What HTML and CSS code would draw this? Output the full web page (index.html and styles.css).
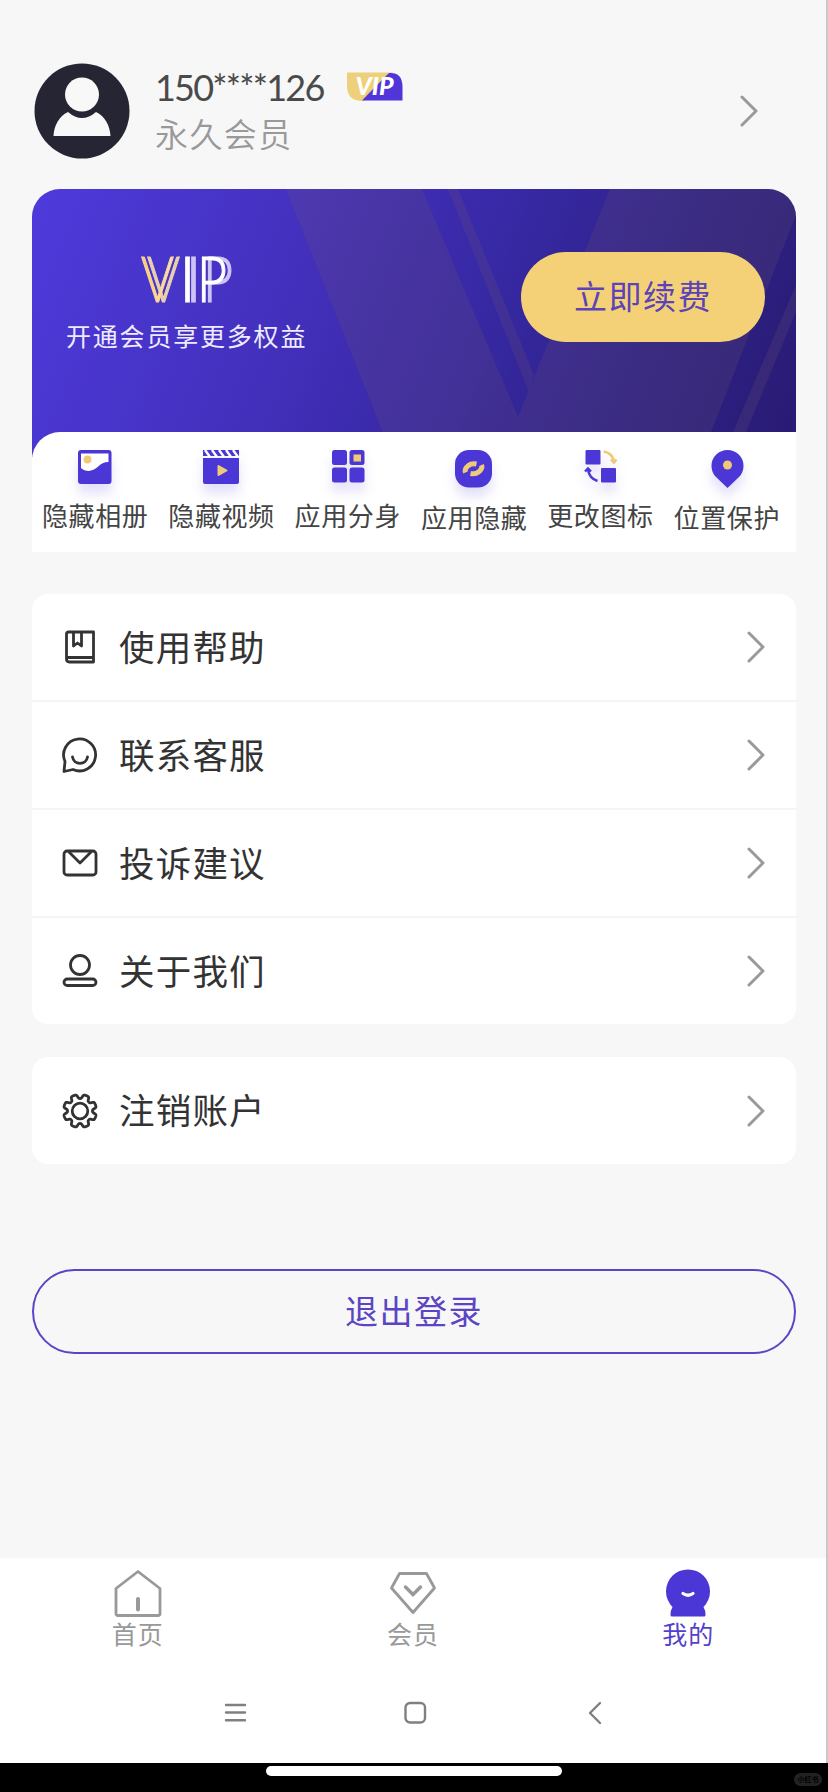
FILE: index.html
```html
<!DOCTYPE html>
<html lang="zh-CN">
<head>
<meta charset="utf-8">
<title>我的</title>
<link rel="stylesheet" href="styles.css">
</head>
<body>
<svg class="defs" width="0" height="0" aria-hidden="true">
  <symbol id="chevron" viewBox="0 0 20 32"><path d="M3 2 17 16 3 30" fill="none" stroke="#9a9a9a" stroke-width="3" stroke-linecap="round" stroke-linejoin="round"/></symbol>
</svg>
<div class="screen">
  <header class="profile">
    <svg class="avatar" viewBox="0 0 96 96"><circle cx="48" cy="48" r="47.5" fill="#262534"/><circle cx="48" cy="31.500" r="17" fill="#f8f8f8"/><path d="M19.500 73C20 63 25 53 34 49Q48 61 62 49C71 53 76 63 76.500 73Z" fill="#f8f8f8"/></svg>
    <div class="who">
      <div class="phone-line">
        <span class="phone">150****126</span>
        <svg class="badge" viewBox="0 0 56 30"><path d="M0 0.500H46L17 29H14Q0 28 0 14Z" fill="#efd07a"/><path d="M42 1Q55 0 55.500 14V28.500H15L27 16Z" fill="#5036d9"/><text x="8.500" y="22.500" class="badge-text" textLength="38" lengthAdjust="spacingAndGlyphs">VIP</text></svg>
      </div>
      <div class="level">永久会员</div>
    </div>
    <svg class="chevron"><use href="#chevron"/></svg>
  </header>

  <section class="vip-card">
    <div class="banner">
      <svg class="rays" viewBox="0 0 764 264" preserveAspectRatio="none">
        <g fill="#6c5470" fill-opacity=".22">
          <path d="M254 0H390L486 228L578 0H764V26L679 243V264H359Z"/>
          <path d="M416 0H426L502 186L497 203Z"/>
          <path d="M764 96V123L714 243H701Z"/>
        </g>
      </svg>
      <div class="pitch">
        <svg class="logo" viewBox="0 0 94 50"><defs><linearGradient id="gold" x1="0" x2="1"><stop offset="0" stop-color="#ffc86a"/><stop offset="1" stop-color="#f8e5c0"/></linearGradient></defs>
          <text class="logo-v" x="1" y="47" fill="url(#gold)" textLength="33" lengthAdjust="spacingAndGlyphs">V</text><text class="logo-ip" x="39" y="47" textLength="17" lengthAdjust="spacingAndGlyphs">I</text><text class="logo-ip" x="57" y="47" textLength="30" lengthAdjust="spacingAndGlyphs">P</text></svg>
        <div class="slogan">开通会员享更多权益</div>
      </div>
      <div class="renew">立即续费</div>
    </div>
    <div class="features">
      <div class="feature"><svg viewBox="0 0 40 38"><rect x="3" y="0" width="33.500" height="34" rx="3" fill="#4b36d6"/><path d="M6 3.500H33.500V12C24 12 23 20 14 21Q9 21 6 18Z" fill="#fff"/><circle cx="12.500" cy="9.500" r="4" fill="#efcb78"/></svg><span>隐藏相册</span></div>
      <div class="feature"><svg viewBox="0 0 40 38"><path d="M2 0H38V6H2Z" fill="#4b36d6"/><path d="M2 8H38V32Q38 34 36 34H4Q2 34 2 32Z" fill="#4b36d6"/><path d="M4 0 9 7M11 0 16 7M18 0 23 7M25 0 30 7M32 0 37 7" stroke="#fff" stroke-width="2.400"/><path d="M17.500 16 25.500 20.500 17.500 25Z" fill="#efcb78" stroke="#efcb78" stroke-width="2" stroke-linejoin="round"/></svg><span>隐藏视频</span></div>
      <div class="feature"><svg viewBox="0 0 40 38"><g fill="#4b36d6"><rect x="4" y="0" width="15" height="15" rx="2.500"/><rect x="21.500" y="0" width="15" height="15" rx="2.500"/><rect x="4" y="17.500" width="15" height="15" rx="2.500"/><rect x="21.500" y="17.500" width="15" height="15" rx="2.500"/></g><rect x="25.500" y="4.500" width="7.500" height="7" fill="#efcb78"/></svg><span>应用分身</span></div>
      <div class="feature lower"><svg viewBox="0 0 40 38"><rect x="1" y="0" width="37" height="37.500" rx="14" fill="#4b36d6"/><g fill="none" stroke="#efcb78" stroke-width="5"><path d="M11.500 22.500Q10 19 14.500 15.500 17.500 13 22.500 14"/><path d="M27.500 15Q29 18.500 24.500 22 21.500 24.500 16.500 23.500"/></g></svg><span>应用隐藏</span></div>
      <div class="feature"><svg viewBox="0 0 40 38"><rect x="5.500" y="0" width="15" height="14.500" rx="1" fill="#4b36d6"/><rect x="21" y="18" width="15" height="14.500" rx="1" fill="#4b36d6"/><path d="M23.500 1.500Q32.500 3 34 11.500M31 9.500 34 12.500 36.500 9.500" fill="none" stroke="#efcb78" stroke-width="2.600"/><path d="M17.500 31Q9.500 28.500 8 20M5 21.500 8 18.500 11 21.500" fill="none" stroke="#4b36d6" stroke-width="2.400"/></svg><span>更改图标</span></div>
      <div class="feature lower"><svg viewBox="0 0 40 38"><path d="M20.500 38 9 27A16 16 0 1 1 32 27Z" fill="#4b36d6"/><circle cx="20.500" cy="15" r="4.500" fill="#efcb78"/></svg><span>位置保护</span></div>
    </div>
  </section>

  <section class="menu">
    <div class="row"><svg class="icon" viewBox="0 0 36 36"><path d="M6.500 3H31.500V33H7.500Q4.500 33 4.500 30V5Q4.500 3 6.500 3M4.500 28.500H31.500M11.500 3V17L15.500 14 19.500 17V3" /></svg><span>使用帮助</span><svg class="chevron"><use href="#chevron"/></svg></div>
    <div class="row"><svg class="icon" viewBox="0 0 36 36"><path d="M2 34.500 3 24.500A16 16 0 1 1 11 32.500ZM10.500 20A7.600 7.600 0 0 0 25.500 20" /></svg><span>联系客服</span><svg class="chevron"><use href="#chevron"/></svg></div>
    <div class="row"><svg class="icon" viewBox="0 0 36 36"><rect x="2" y="6" width="32" height="24" rx="3"/><path d="M7 7 18 18 29 7"/></svg><span>投诉建议</span><svg class="chevron"><use href="#chevron"/></svg></div>
    <div class="row"><svg class="icon" viewBox="0 0 36 36"><circle cx="18" cy="12" r="9.500"/><rect x="2" y="26" width="32" height="6.500" rx="3.250"/></svg><span>关于我们</span><svg class="chevron"><use href="#chevron"/></svg></div>
  </section>

  <section class="menu account">
    <div class="row"><svg class="icon gear" viewBox="0 0 36 36"><path id="gear"/><circle cx="18" cy="18" r="7.800"/></svg><span>注销账户</span><svg class="chevron"><use href="#chevron"/></svg></div>
  </section>

  <div class="logout">退出登录</div>

  <footer class="bottom">
    <nav class="tabs">
      <div class="tab"><svg viewBox="0 0 50 50"><path d="M25 2.500 47 19.500V44.500Q47 46.500 45 46.500H5Q3 46.500 3 44.500V19.500Z" fill="none" stroke="#999" stroke-width="2.800" stroke-linejoin="round"/><path d="M25 30V40.500" stroke="#999" stroke-width="4" stroke-linecap="round"/></svg><span>首页</span></div>
      <div class="tab"><svg viewBox="0 0 50 50"><path d="M11.500 4.500H38.500L46.500 19 25 43.500 3.500 19Z" fill="none" stroke="#999" stroke-width="2.800" stroke-linejoin="round"/><path d="M17.500 18 25 25.500 32.500 18" fill="none" stroke="#999" stroke-width="3.500" stroke-linecap="round"/></svg><span>会员</span></div>
      <div class="tab active"><svg viewBox="0 0 50 50"><path d="M9.500 38A22 22 0 1 1 40.500 38Q42.500 41 42.500 46Q42.500 47.500 41 47.500H9Q7.500 47.500 7.500 46 7.500 41 9.500 38Z" fill="#4b36d6"/><path d="M20 24.500Q25 28 30 24.500" fill="none" stroke="#fff" stroke-width="3.200" stroke-linecap="round"/></svg><span>我的</span></div>
    </nav>
    <div class="system-nav">
      <svg viewBox="0 0 24 24"><path d="M3 4H22M3 11.500H22M3 19.200H22"/></svg>
      <svg viewBox="0 0 24 24"><rect x="2.500" y="2" width="19.500" height="19.500" rx="4.500"/></svg>
      <svg viewBox="0 0 24 24"><path d="M18 2 8 12 18 22"/></svg>
    </div>
    <div class="home-strip"><div class="home-bar"></div><span class="mark">小红书</span></div>
  </footer>
</div>
<script src="gear.js"></script>
</body>
</html>
```

FILE: gear.js
```js
// Eight-toothed gear outline, rounded by a smooth radial wave.
const points = [];
for (let i = 0; i < 240; i++) {
  const a = (i / 240) * Math.PI * 2;
  const wave = Math.tanh(2.2 * (Math.cos(8 * (a - Math.PI / 8)) + 0.25)) / Math.tanh(2.2);
  const r = 14.5 + 2.1 * wave;
  points.push((18 + r * Math.cos(a)).toFixed(2) + ' ' + (18 + r * Math.sin(a)).toFixed(2));
}
document.getElementById('gear').setAttribute('d', 'M' + points.join('L') + 'Z');
```

FILE: styles.css
```css
* { box-sizing: border-box; }
body { margin: 0; background: #f7f7f7; font-family: "Noto Sans CJK SC", sans-serif; color: #333; }
svg { display: block; flex: none; }
.defs { position: absolute; }
.screen { width: 828px; height: 1792px; display: flex; flex-direction: column; overflow: hidden; background: linear-gradient(#c8c8c8, #c8c8c8) right top / 2px 1763px no-repeat #f7f7f7; }

.profile { display: flex; align-items: center; height: 189px; padding: 32px 69px 0 34px; }
.avatar { width: 96px; height: 96px; }
.who { flex: 1; margin-left: 25px; padding-bottom: 2px; }
.phone-line { display: flex; align-items: center; height: 46px; }
.phone { width: 192px; font-family: Lato, sans-serif; font-size: 36px; line-height: 46px; letter-spacing: -1.8px; color: #4a4a4a; white-space: nowrap; }
.badge { width: 56px; height: 30px; overflow: visible; }
.badge-text { font: italic 900 25px Lato, sans-serif; fill: #fff; }
.level { font-size: 33px; line-height: 46px; letter-spacing: 1.4px; font-weight: 350; color: #999; }
.chevron { width: 20px; height: 32px; }

.vip-card { margin: 0 32px; height: 363px; border-radius: 28px 28px 0 0; overflow: hidden; background: linear-gradient(112deg, #4e3adb 0%, #4431bf 32%, #3829a6 55%, #2e2289 76%, #291b73 100%); background-size: 100% 268px; background-repeat: no-repeat; background-color: #fff; }
.banner { position: relative; display: flex; justify-content: space-between; height: 243px; padding: 0 31px 0 34px; }
.rays { position: absolute; left: 0; top: 0; width: 764px; height: 264px; }
.pitch { position: relative; display: flex; flex-direction: column; padding-top: 66px; }
.logo { width: 94px; height: 50px; margin-left: 74px; overflow: visible; }
.logo-v, .logo-ip { font: 300 63px Lato, sans-serif; stroke-width: 1.2; }
.logo-v { stroke: #fbd591; filter: drop-shadow(6px 0 0 #e9cfae); }
.logo-ip { fill: #fff; stroke: #fff; filter: drop-shadow(6px 0 0 #cdc4f5); }
.slogan { margin-top: 10px; font-size: 25px; line-height: 40px; letter-spacing: 1.8px; color: #eeebff; }
.renew { position: relative; width: 244px; height: 90px; margin-top: 63px; border-radius: 45px; background: #f4d176; color: #5b43b8; font-size: 33px; line-height: 87px; letter-spacing: 1.5px; text-align: center; }
.features { display: flex; height: 120px; padding: 18px 6px 0 0; border-radius: 28px 0 0 0; background: #fff; position: relative; }
.feature { flex: 1; display: flex; flex-direction: column; align-items: center; font-size: 26px; letter-spacing: .6px; line-height: 38px; color: #444; white-space: nowrap; }
.feature svg { width: 40px; height: 38px; margin-bottom: 8px; overflow: visible; filter: drop-shadow(0 9px 6px rgba(75, 54, 214, .16)); }
.feature.lower svg { margin-bottom: 10px; }

.menu { margin: 42px 32px 0; border-radius: 16px; background: #fff; overflow: hidden; }
.row { display: flex; align-items: center; height: 106px; padding: 0 30px; }
.row + .row { height: 108px; border-top: 2px solid #f5f5f5; }
.row span { flex: 1; margin-left: 21px; padding-bottom: 3px; font-size: 35.5px; line-height: 50px; letter-spacing: 1.2px; }
.icon { width: 36px; height: 36px; fill: none; stroke: #333; stroke-width: 2.8; stroke-linejoin: round; stroke-linecap: round; }
.account { margin-top: 33px; }
.account .row { height: 107px; }

.logout { margin: 105px 32px 0; height: 85px; border: 2px solid #5b45c4; border-radius: 43px; color: #5b45c4; font-size: 33px; line-height: 78px; letter-spacing: 1.5px; text-align: center; }

.bottom { margin-top: auto; width: 826px; background: #fff; }
.tabs { display: flex; height: 110px; padding-top: 11px; }
.tab { flex: 1; display: flex; flex-direction: column; align-items: center; font-size: 25px; line-height: 32px; letter-spacing: 1px; color: #999; }
.tab svg { width: 50px; height: 50px; }
.tab span { margin-top: -2px; }
.tab.active { color: #5540cc; }
.system-nav { display: flex; justify-content: space-between; height: 95px; padding: 33px 220px 0 223px; }
.system-nav svg { width: 24px; height: 24px; fill: none; stroke: #808080; stroke-width: 2.4; stroke-linecap: round; stroke-linejoin: round; }
.home-strip { position: relative; width: 828px; height: 29px; padding-top: 3px; background: #000; }
.home-bar { width: 296px; height: 10px; margin: 0 auto; border-radius: 5px; background: #fff; }
.mark { position: absolute; right: 6px; bottom: 6px; width: 28px; height: 13px; border-radius: 7px; background: #222; color: #000; font-size: 7px; line-height: 13px; font-weight: 700; text-align: center; }
```
